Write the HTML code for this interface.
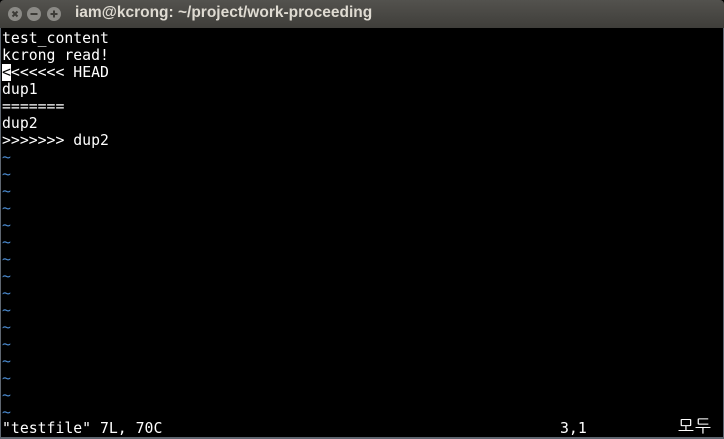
<!DOCTYPE html>
<html><head><meta charset="utf-8"><style>
html,body{margin:0;padding:0;width:724px;height:439px;overflow:hidden;background:#000;}
.win{position:absolute;left:0;top:0;width:724px;height:439px;background:#000;}
.title{position:absolute;left:0;top:0;width:724px;height:28px;background:linear-gradient(#53524e,#3f3e3a);border-radius:4px 4px 0 0;}
.btn{position:absolute;top:7px;width:14px;height:14px;border-radius:50%;background:#8b8a86;}
.btn svg{position:absolute;left:0;top:0}
.ttext{position:absolute;left:75px;top:4px;font:bold 15.5px "Liberation Sans",sans-serif;color:#dfdbd2;}
.term{position:absolute;left:2px;top:30px;font-family:"DejaVu Sans Mono","Liberation Mono",monospace;font-size:14.8px;line-height:17px;color:#fff;white-space:pre;}
.t{color:#4a8ad0}
.cur{background:#fff;color:#000}
.status{position:absolute;left:2px;top:420px;width:720px;font-family:"DejaVu Sans Mono","Liberation Mono","NanumGothic",monospace;font-size:14.8px;line-height:17px;color:#fff;white-space:pre;}
.bl{position:absolute;left:0;top:28px;width:1px;height:411px;background:#5e6670}
.br{position:absolute;right:0;top:28px;width:1px;height:411px;background:#5e6670}
.bb{position:absolute;left:0;bottom:0;width:724px;height:2px;background:#5e6670}
</style></head><body><div class="win">
<div class="title">
<div class="btn" style="left:8px"><svg width="14" height="14"><path d="M4.5 4.5L9.5 9.5M9.5 4.5L4.5 9.5" stroke="#3c3b37" stroke-width="2"/></svg></div>
<div class="btn" style="left:27px"><svg width="14" height="14"><path d="M3.5 7H10.5" stroke="#3c3b37" stroke-width="2"/></svg></div>
<div class="btn" style="left:47px"><svg width="14" height="14"><path d="M3.5 7H10.5M7 3.5V10.5" stroke="#3c3b37" stroke-width="2"/></svg></div>
<div class="ttext">iam@kcrong: ~/project/work-proceeding</div>
</div>
<div class="term">test_content
kcrong read!
<span class="cur">&lt;</span>&lt;&lt;&lt;&lt;&lt;&lt; HEAD
dup1
=======
dup2
&gt;&gt;&gt;&gt;&gt;&gt;&gt; dup2
<span class="t">~
~
~
~
~
~
~
~
~
~
~
~
~
~
~
~</span></div>
<div class="status">"testfile" 7L, 70C<span style="position:absolute;left:558px">3,1</span><span style="position:absolute;left:676px;top:-2px;font-family:'NanumGothic','Noto Sans CJK KR',sans-serif;font-size:17px;letter-spacing:1px">모두</span></div>
<div class="bl"></div><div class="br"></div><div class="bb"></div>
</div></body></html>
